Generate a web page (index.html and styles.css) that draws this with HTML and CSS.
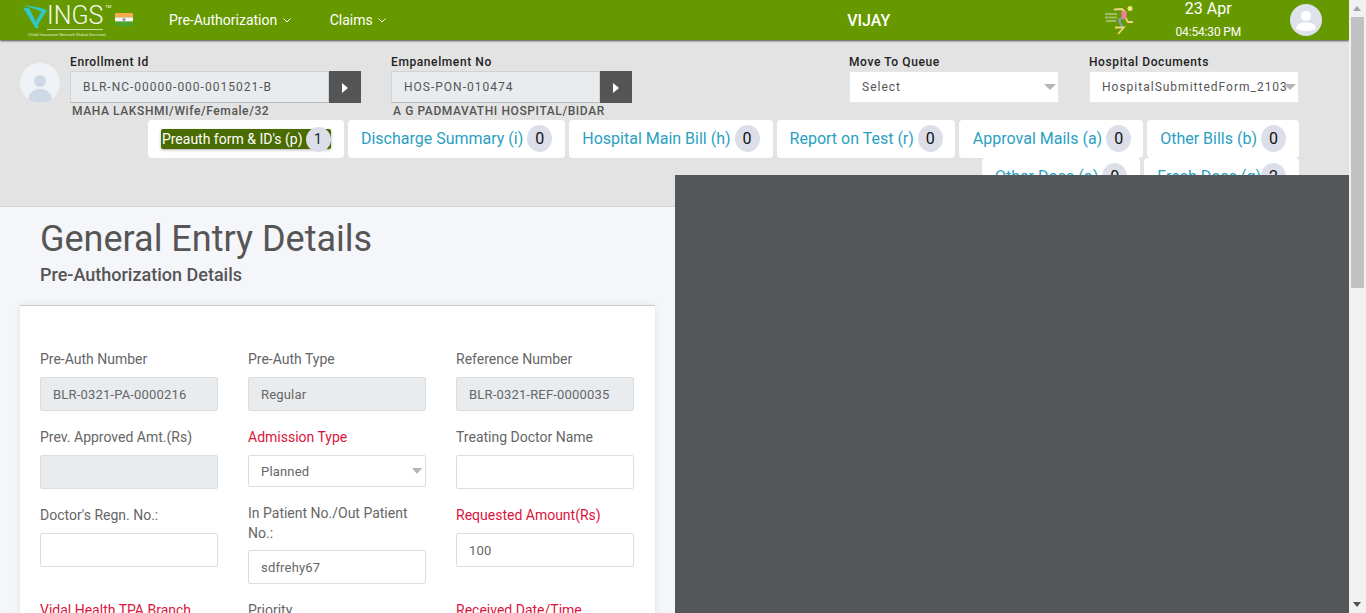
FILE: index.html
```html
<!DOCTYPE html>
<html lang="en">

<head>
    <meta charset="UTF-8">
    <meta name="viewport" content="width=device-width, initial-scale=1.0">
    <title>General Entry Details</title>
    <link rel="stylesheet" href="styles.css">
</head>

<body>
    <div class="shell">
        <div class="page">
            <header class="topbar">
                <div class="logo">
                    <div class="logo-main">
                        <svg class="logo-v" width="24" height="23" viewBox="0 0 24 23">
                            <path d="M0 2.500 L6.500 3.500 L16 23 L12.500 23 Z" fill="#2fc9c9"/>
                            <path d="M12.500 23 L24 5.500 C17 2 9 1.500 0 0 C8 3 13 4 18.500 6.500 L13.500 15 Z" fill="#2fc9c9"/>
                        </svg>
                        <span class="logo-name">INGS</span>
                        <span class="logo-tm">TM</span>
                    </div>
                    <div class="logo-sub">(Vidal Insurance Network Global Services)</div>
                </div>
                <svg class="flag" width="18" height="13" viewBox="0 0 18 13">
                    <rect width="18" height="4.400" fill="#f6ab4f"/>
                    <rect y="4.400" width="18" height="4.200" fill="#f7f7f7"/>
                    <rect y="8.600" width="18" height="4.400" fill="#4aa32c"/>
                    <circle cx="9" cy="6.500" r="1.600" fill="#8f8fb8"/>
                </svg>
                <nav class="nav">
                    <a class="nav-link">Pre-Authorization
                        <svg width="8" height="5" viewBox="0 0 8 5"><path d="M.5 .5 L4 4 L7.500 .5" fill="none" stroke="#fff"/></svg>
                    </a>
                    <a class="nav-link">Claims
                        <svg width="8" height="5" viewBox="0 0 8 5"><path d="M.5 .5 L4 4 L7.500 .5" fill="none" stroke="#fff"/></svg>
                    </a>
                </nav>
                <div class="user-name">VIJAY</div>
                <svg class="runner" width="31" height="32" viewBox="0 0 31 32">
                    <path d="M1 10H13M1 13.500H13M2 17H12" stroke="#a9c77b" stroke-width="2" opacity=".8"/>
                    <circle cx="26" cy="4.500" r="2.500" fill="#f4e08a"/>
                    <path d="M10 5.500 L18 5 L21 8" fill="none" stroke="#ecd77f" stroke-width="1.800"/>
                    <path d="M21 13 L24 18 L29 18" fill="none" stroke="#ecd77f" stroke-width="1.800"/>
                    <path d="M17 8 L23 7 L22 15 L18 15 Z" fill="#ee7fa0"/>
                    <path d="M18 14 L15 16 L18 23" fill="none" stroke="#7f9bb0" stroke-width="2.500"/>
                    <path d="M11 23.500 L20 23.500 L14 30" fill="none" stroke="#ecd77f" stroke-width="1.800"/>
                </svg>
                <div class="clock">
                    <div class="clock-date">23 Apr</div>
                    <div class="clock-time">04:54:30 PM</div>
                </div>
                <svg class="top-avatar" width="32" height="32" viewBox="0 0 32 32">
                    <circle cx="16" cy="16" r="16" fill="#dfe2ea"/>
                    <circle cx="16" cy="12" r="5" fill="#fff"/>
                    <path d="M6 25 C7 19 11 18.500 16 18.500 C21 18.500 25 19 26 25 C21 27.500 11 27.500 6 25 Z" fill="#fff"/>
                </svg>
            </header>

            <section class="summary">
                <div class="summary-row">
                    <svg class="member-avatar" width="40" height="40" viewBox="0 0 40 40">
                        <circle cx="20" cy="20" r="20" fill="#eff2f6"/>
                        <circle cx="20" cy="18" r="6" fill="#cfd9e5"/>
                        <path d="M8.500 36 C9 29 14 26 20 26 C26 26 31 29 32 36 C26 41 14 41 8.500 36 Z" fill="#cfd9e5"/>
                    </svg>
                    <div class="lookup lookup-enrol">
                        <label class="top-label">Enrollment Id</label>
                        <div class="lookup-box">
                            <input class="lookup-input" value="BLR-NC-00000-000-0015021-B" readonly>
                            <button class="lookup-btn"><span class="play"></span></button>
                        </div>
                        <div class="lookup-note">MAHA LAKSHMI/Wife/Female/32</div>
                    </div>
                    <div class="lookup lookup-hosp">
                        <label class="top-label">Empanelment No</label>
                        <div class="lookup-box">
                            <input class="lookup-input" value="HOS-PON-010474" readonly>
                            <button class="lookup-btn"><span class="play"></span></button>
                        </div>
                        <div class="lookup-note">A G PADMAVATHI HOSPITAL/BIDAR</div>
                    </div>
                    <div class="picker picker-queue">
                        <label class="top-label">Move To Queue</label>
                        <div class="select-wrap">
                            <select class="top-select"><option>Select</option></select>
                        </div>
                    </div>
                    <div class="picker">
                        <label class="top-label">Hospital Documents</label>
                        <div class="select-wrap">
                            <select class="top-select"><option>HospitalSubmittedForm_2103</option></select>
                        </div>
                    </div>
                </div>

                <div class="tabs">
                    <a class="tab tab-active"><span class="tab-pill">Preauth form &amp; ID's (p) <span class="count count-small">1</span></span></a>
                    <a class="tab">Discharge Summary (i) <span class="count">0</span></a>
                    <a class="tab">Hospital Main Bill (h) <span class="count">0</span></a>
                    <a class="tab tab-report">Report on Test (r) <span class="count">0</span></a>
                    <a class="tab tab-approval">Approval Mails (a) <span class="count">0</span></a>
                    <a class="tab">Other Bills (b) <span class="count">0</span></a>
                    <a class="tab">Other Docs (o) <span class="count">0</span></a>
                    <a class="tab tab-fresh">Fresh Docs (g) <span class="count">2</span></a>
                </div>
            </section>

            <main class="content">
                <h1 class="page-title">General Entry Details</h1>
                <h2 class="page-sub">Pre-Authorization Details</h2>
                <div class="card">
                    <div class="form-grid">
                        <div class="field">
                            <label>Pre-Auth Number</label>
                            <input class="ctl" value="BLR-0321-PA-0000216" disabled>
                        </div>
                        <div class="field">
                            <label>Pre-Auth Type</label>
                            <input class="ctl" value="Regular" disabled>
                        </div>
                        <div class="field">
                            <label>Reference Number</label>
                            <input class="ctl" value="BLR-0321-REF-0000035" disabled>
                        </div>

                        <div class="field">
                            <label>Prev. Approved Amt.(Rs)</label>
                            <input class="ctl" disabled>
                        </div>
                        <div class="field">
                            <label class="req">Admission Type</label>
                            <div class="select-wrap">
                                <select class="ctl ctl-select"><option>Planned</option></select>
                            </div>
                        </div>
                        <div class="field">
                            <label>Treating Doctor Name</label>
                            <input class="ctl">
                        </div>

                        <div class="field">
                            <label>Doctor's Regn. No.:</label>
                            <input class="ctl">
                        </div>
                        <div class="field field-up">
                            <label>In Patient No./Out Patient No.:</label>
                            <input class="ctl" value="sdfrehy67">
                        </div>
                        <div class="field">
                            <label class="req">Requested Amount(Rs)</label>
                            <input class="ctl" value="100">
                        </div>

                        <div class="field">
                            <label class="req">Vidal Health TPA Branch</label>
                        </div>
                        <div class="field">
                            <label>Priority</label>
                        </div>
                        <div class="field">
                            <label class="req">Received Date/Time</label>
                        </div>
                    </div>
                </div>
            </main>

            <div class="dark-panel"></div>
        </div>

        <div class="scrollbar">
            <span class="arrow-up"></span>
            <span class="thumb"></span>
            <span class="arrow-down"></span>
        </div>
    </div>
</body>

</html>
```

FILE: styles.css
```css
* {
    box-sizing: border-box;
}

html,
body {
    margin: 0;
    height: 100%;
    overflow: hidden;
}

body {
    font-family: Roboto, "Liberation Sans", sans-serif;
    font-size: 14px;
    color: #555;
}

.shell {
    display: flex;
    height: 613px;
}

.page {
    position: relative;
    width: 1349px;
    height: 613px;
    overflow: hidden;
    background: #f4f6fa;
}

/* top green bar */
.topbar {
    position: relative;
    z-index: 2;
    display: flex;
    align-items: center;
    height: 40px;
    padding-left: 23px;
    background: #669900;
    box-shadow: 0 1px 2px rgba(0, 0, 0, .65);
    color: #fff;
}

.logo {
    width: 92px;
    height: 36px;
    flex: none;
    margin-top: 2px;
}

.logo-main {
    display: flex;
    align-items: flex-start;
    height: 26px;
}

.logo-v {
    flex: none;
    margin-top: 2px;
}

.logo-name {
    height: 27px;
    font-size: 25px;
    font-weight: 300;
    line-height: 26px;
    border-bottom: 1px solid #c9dda0;
    color: #f4f8ef;
}

.logo-tm {
    font-size: 4px;
    line-height: 8px;
    margin-left: 2px;
}

.logo-sub {
    margin: 3px 0 0 5px;
    font-size: 4.200px;
    line-height: 6px;
    white-space: nowrap;
    color: #dfe9c9;
}

.flag {
    flex: none;
    margin-top: -2px;
}

.nav {
    display: flex;
    margin-left: 36px;
    gap: 39px;
}

.nav-link {
    font-size: 14px;
    white-space: nowrap;
}

.nav-link svg {
    margin-left: 2px;
    vertical-align: 2px;
}

.user-name {
    margin-left: 461px;
    font-size: 16px;
    font-weight: 500;
    white-space: nowrap;
}

.runner {
    flex: none;
    margin-left: 214px;
    filter: blur(.3px);
}

.clock {
    align-self: flex-start;
    width: 90px;
    margin-left: 28px;
    padding-top: 1px;
    text-align: center;
    white-space: nowrap;
}

.clock-date {
    font-size: 16px;
    line-height: 16px;
}

.clock-time {
    margin-top: 8px;
    font-size: 12px;
    letter-spacing: -.15px;
    line-height: 14px;
}

.top-avatar {
    flex: none;
    margin-left: 37px;
}

/* grey member strip */
.summary {
    height: 167px;
    padding: 15px 50px 0 20px;
    background: #e3e3e3;
    border-bottom: 1px solid #d6d6d6;
}

.summary-row {
    display: flex;
    align-items: flex-start;
    height: 65px;
}

.member-avatar {
    flex: none;
    margin: 8px 10px 0 0;
}

.top-label {
    display: block;
    height: 16px;
    font-size: 12px;
    font-weight: 500;
    line-height: 14px;
    letter-spacing: .6px;
    color: #222;
}

.lookup-enrol {
    width: 291px;
}

.lookup-hosp {
    width: 241px;
    margin-left: 30px;
}

.lookup-box {
    display: flex;
    height: 32px;
}

.lookup-input {
    flex: 1;
    min-width: 0;
    height: 32px;
    padding: 0 12px;
    border: 1px solid #d2d2d2;
    border-bottom-color: #bbb;
    background: #e9ecef;
    font: 12px Roboto, sans-serif;
    letter-spacing: 1px;
    color: #555;
    outline: 0;
}

.lookup-btn {
    width: 32px;
    height: 32px;
    padding: 0;
    border: 0;
    background: #555;
}

.play {
    display: inline-block;
    border-left: 6px solid #fff;
    border-top: 5px solid transparent;
    border-bottom: 5px solid transparent;
    vertical-align: middle;
}

.lookup-note {
    margin: 1px 0 0 2px;
    font-size: 12px;
    font-weight: 500;
    line-height: 14px;
    letter-spacing: .6px;
    white-space: nowrap;
    color: #555;
}

.picker {
    width: 210px;
    margin-left: 30px;
}

.picker-queue {
    margin-left: 217px;
}

.select-wrap {
    position: relative;
}

.select-wrap::after {
    content: "";
    position: absolute;
    top: 50%;
    right: 3px;
    margin-top: -3px;
    border-top: 6px solid #b5b5b5;
    border-left: 6.500px solid transparent;
    border-right: 6.500px solid transparent;
}

.top-select {
    display: block;
    width: 100%;
    height: 32px;
    padding: 0 0 0 12px;
    border: 1px solid #e5e5e5;
    background: #fff;
    appearance: none;
    font: 12px Roboto, sans-serif;
    letter-spacing: 1px;
    color: #555;
    outline: 0;
}

/* document tabs */
.tabs {
    display: flex;
    flex-wrap: wrap;
    justify-content: flex-end;
    gap: 0 4px;
    width: 1159px;
    margin: 0 0 0 120px;
}

.tab {
    display: flex;
    align-items: center;
    height: 38px;
    padding: 0 13px 2px;
    background: #fff;
    border-radius: 4px;
    font-size: 16px;
    white-space: nowrap;
    color: #2a9fc2;
}

.tab-report {
    padding-right: 12px;
}

.tab-approval {
    padding-left: 14px;
    padding-right: 12px;
}

.tab-fresh .count {
    margin-left: 0;
}

.tab-active {
    width: 196px;
}

.tab-pill {
    display: flex;
    align-items: center;
    width: 170px;
    height: 20px;
    margin-top: 2px;
    padding-left: 1px;
    background: #4a6b00;
    border-radius: 2px;
    box-shadow: 0 1px 3px rgba(0, 0, 0, .3);
    font-size: 14px;
    color: #fff;
}

.count {
    display: inline-block;
    flex: none;
    width: 25px;
    height: 27px;
    margin-left: 4px;
    border-radius: 50%;
    background: #dcdfe9;
    font-size: 16px;
    line-height: 27px;
    text-align: center;
    color: #111;
}

.count-small {
    height: 25px;
    margin-left: 3px;
    font-size: 14px;
    line-height: 25px;
    color: #223;
}

/* form */
.content {
    padding: 0 0 0 20px;
}

.page-title {
    margin: 12px 0 0 20px;
    font-size: 36px;
    font-weight: 400;
    line-height: 40px;
    color: #555;
}

.page-sub {
    margin: 5px 0 0 20px;
    font-size: 18px;
    font-weight: 500;
    line-height: 22px;
    color: #555;
}

.card {
    width: 635px;
    height: 340px;
    margin-top: 19px;
    padding: 44px 21px 0 20px;
    background: #fff;
    border-top: 1px solid #c9c9c9;
    box-shadow: 0 0 8px rgba(0, 0, 0, .08);
}

.form-grid {
    display: grid;
    grid-template-columns: repeat(3, 178px);
    gap: 17px 30px;
    align-items: start;
}

.field label {
    display: block;
    margin-bottom: 7.500px;
    font-size: 14px;
    line-height: 19.500px;
    color: #666;
}

.field label.req {
    color: #dc143c;
}

.field-up {
    margin-top: -2px;
}

.field-up label {
    margin-bottom: 7px;
}

.ctl {
    display: block;
    width: 100%;
    height: 34px;
    padding: 0 12px;
    border: 1px solid #ddd;
    border-radius: 2px;
    background: #fff;
    font: 13px Roboto, sans-serif;
    letter-spacing: .18px;
    color: #666;
    outline: 0;
}

.ctl:disabled {
    background: #e9ecef;
    color: #666;
    opacity: 1;
}

.ctl-select {
    height: 32px;
    appearance: none;
}

.field .select-wrap::after {
    right: 4px;
    margin-top: -3px;
    border-top-width: 6px;
    border-left-width: 5px;
    border-right-width: 5px;
}

/* overlay left open over the right half */
.dark-panel {
    position: absolute;
    top: 175px;
    left: 675px;
    right: 0;
    bottom: 0;
    z-index: 3;
    background: #53575a;
}

/* page scrollbar */
.scrollbar {
    position: relative;
    width: 17px;
    height: 613px;
    background: #f1f1f1;
}

.thumb {
    position: absolute;
    top: 17px;
    left: 2px;
    width: 13px;
    height: 271px;
    background: #c1c1c1;
}

.arrow-up,
.arrow-down {
    position: absolute;
    left: 4px;
    border-left: 4.500px solid transparent;
    border-right: 4.500px solid transparent;
}

.arrow-up {
    top: 6px;
    border-bottom: 5px solid #a3a3a3;
}

.arrow-down {
    bottom: 6px;
    border-top: 5px solid #505050;
}
```
